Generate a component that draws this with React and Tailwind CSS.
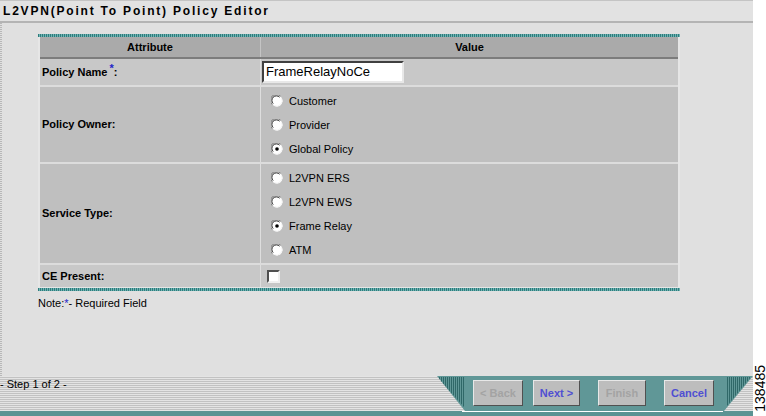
import React from "react";

const font = { fontFamily: '"Liberation Sans", Arial, sans-serif' };

const Radio = ({ checked }) => (
  <svg width="12" height="12" viewBox="0 0 12 12" className="shrink-0">
    <circle cx="6" cy="6" r="5.5" fill="#ffffff" />
    <path d="M1.1 9.5 A5.5 5.5 0 0 1 9.5 1.1" stroke="#808080" strokeWidth="1" fill="none" />
    <path d="M2.2 8.6 A4.5 4.5 0 0 1 8.6 2.2" stroke="#303030" strokeWidth="1" fill="none" />
    <path d="M10.2 2.6 A5.5 5.5 0 0 1 2.6 10.2" stroke="#f4f4f4" strokeWidth="1" fill="none" />
    {checked && <circle cx="6" cy="6" r="1.8" fill="#000000" />}
  </svg>
);

const Option = ({ label, checked }) => (
  <div className="h-[24px] flex items-center gap-[6px] pl-[10px]">
    <Radio checked={checked} />
    <span className="text-[11px] text-black">{label}</span>
  </div>
);

const Label = ({ children }) => (
  <div className="w-[221px] shrink-0 flex items-center pl-[2px] text-[11px] font-bold text-black border-r border-[#dedede]">
    {children}
  </div>
);

const Btn = ({ label, active, className }) => (
  <div
    className={
      "h-[26px] flex items-center justify-center bg-[#bdbdbd] border border-t-[#e8e8e8] border-l-[#e8e8e8] border-b-[#505050] border-r-[#505050] text-[11px] font-bold " +
      (active ? "text-[#4f4fd2] " : "text-[#a3a3a3] ") +
      className
    }
  >
    {label}
  </div>
);

const LeftStripes = () => (
  <svg width="27" height="30" viewBox="0 0 27 30" className="shrink-0 self-start mt-[1px]">
    <defs>
      <clipPath id="lt">
        <polygon points="0,0 27,0 27,30" />
      </clipPath>
    </defs>
    <g clipPath="url(#lt)" stroke="#2f6868" strokeWidth="1">
      {Array.from({ length: 14 }).map((_, i) => (
        <line key={i} x1={i * 2 + 0.5} y1="0" x2={i * 2 + 0.5} y2="30" />
      ))}
    </g>
  </svg>
);

const RightStripes = () => (
  <svg width="24" height="29" viewBox="0 0 24 29" className="shrink-0 self-start mt-[1px]">
    <defs>
      <clipPath id="rt">
        <polygon points="0,0 24,0 0,29" />
      </clipPath>
    </defs>
    <g clipPath="url(#rt)" stroke="#2f6868" strokeWidth="1">
      {Array.from({ length: 12 }).map((_, i) => (
        <line key={i} x1={i * 2 + 0.5} y1="0" x2={i * 2 + 0.5} y2="29" />
      ))}
    </g>
  </svg>
);

export default function App() {
  return (
    <div className="w-[766px] h-[416px] flex bg-white overflow-hidden" style={font}>
      <div className="w-[753px] shrink-0 flex flex-col bg-[#e0e0e0]">
        {/* title */}
        <div className="h-[23px] shrink-0 border-t border-[#c4c4c4] border-b-2 border-b-[#b4b4b4] bg-[#e2e2e2] flex items-center pl-[3px]">
          <span className="text-[12px] font-bold tracking-[1.8px] text-black">
            L2VPN(Point To Point) Policy Editor
          </span>
        </div>

        <div className="flex-1 flex">
          <div className="w-[2px] bg-[repeating-linear-gradient(180deg,#b8b8b8_0_1px,#e0e0e0_1px_2px)]" />
          <div className="flex-1 pl-[36px] pt-[11px]">
            {/* table */}
            <div className="w-[642px]">
              <div className="h-[3px] bg-[repeating-linear-gradient(90deg,#2e7c7c_0_1px,#6fb3b3_1px_2px)]" />
              <div className="border-x-2 border-[#e6e6e6]">
                <div className="h-[20px] flex bg-[#aaaaaa] text-[11px] font-bold text-black">
                  <div className="w-[221px] flex items-center justify-center border-r border-[#c4c4c4]">Attribute</div>
                  <div className="flex-1 flex items-center justify-center">Value</div>
                </div>
                <div className="h-[2px] bg-[#7c7c7c]" />

                <div className="h-[26px] flex bg-[#c8c8c8]">
                  <Label>
                    Policy Name
                    <span className="text-[#2323c8] text-[11px] relative top-[-4px] ml-[2px]">*</span>
                    :
                  </Label>
                  <div className="flex-1 flex items-center pl-[1px]">
                    <div className="w-[142px] h-[22px] bg-white border-2 border-t-[#404040] border-l-[#404040] border-b-[#e8e8e8] border-r-[#e8e8e8] flex items-center pl-[2px] text-[13px] text-black">
                      FrameRelayNoCe
                    </div>
                  </div>
                </div>
                <div className="h-[2px] bg-[#dcdcdc]" />

                <div className="flex bg-[#bfbfbf]">
                  <Label>Policy Owner:</Label>
                  <div className="flex-1 pt-[2px] pb-[1px]">
                    <Option label="Customer" />
                    <Option label="Provider" />
                    <Option label="Global Policy" checked />
                  </div>
                </div>
                <div className="h-[2px] bg-[#dcdcdc]" />

                <div className="flex bg-[#bfbfbf]">
                  <Label>Service Type:</Label>
                  <div className="flex-1 pt-[2px] pb-[1px]">
                    <Option label="L2VPN ERS" />
                    <Option label="L2VPN EWS" />
                    <Option label="Frame Relay" checked />
                    <Option label="ATM" />
                  </div>
                </div>
                <div className="h-[2px] bg-[#dcdcdc]" />

                <div className="h-[22px] flex bg-[#c8c8c8]">
                  <Label>CE Present:</Label>
                  <div className="flex-1 flex items-center pl-[6px]">
                    <div className="w-[13px] h-[13px] bg-white border-2 border-t-[#505050] border-l-[#505050] border-b-[#f0f0f0] border-r-[#f0f0f0]" />
                  </div>
                </div>
              </div>
              <div className="h-[4px] bg-[repeating-linear-gradient(90deg,#2e7c7c_0_1px,#6fb3b3_1px_2px)] border-t border-[#e6e6e6]" />
            </div>
            <div className="mt-[4px] text-[11px] text-black">
              Note:<span className="text-[#2323c8]">*</span>- Required Field
            </div>
          </div>
        </div>

        {/* footer */}
        <div className="h-[35px] shrink-0 flex bg-[repeating-linear-gradient(180deg,#e4e4e4_0_1px,#c2c2c2_1px_2px)]">
          <div className="text-[11px] text-black mt-[1px] leading-[14px]">- Step 1 of 2 -</div>
          <div className="ml-auto w-[316px] h-full bg-[#609797] [clip-path:polygon(0_0,100%_0,287px_100%,28px_100%)] flex items-start">
            <LeftStripes />
            <Btn label="< Back" className="w-[50px] ml-[9px] mt-[4px]" />
            <Btn label="Next >" active className="w-[47px] ml-[10px] mt-[4px]" />
            <Btn label="Finish" className="w-[48px] ml-[18px] mt-[4px]" />
            <Btn label="Cancel" active className="w-[50px] ml-[18px] mt-[4px]" />
            <div className="w-[13px]" />
            <RightStripes />
          </div>
        </div>
        <div className="h-[5px] shrink-0 bg-[#5c9393] flex">
          <div className="ml-[462px] w-[261px] h-[1px] bg-white" />
        </div>
      </div>

      <div className="w-[13px] flex flex-col justify-end pb-[4px] items-center">
        <span className="text-[14px] text-black [writing-mode:vertical-rl] rotate-180 leading-[12px]">138485</span>
      </div>
    </div>
  );
}
